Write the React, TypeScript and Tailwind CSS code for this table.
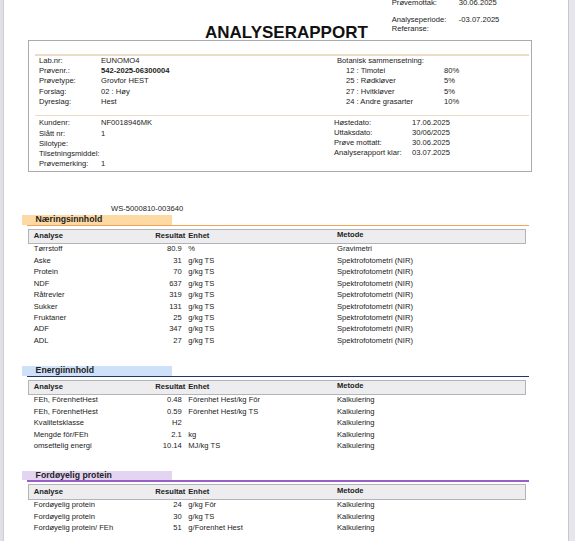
type Row = { analyse: string; resultat: string; enhet: string; metode: string };

const NAERING: Row[] = [
  { analyse: "Tørrstoff", resultat: "80.9", enhet: "%", metode: "Gravimetri" },
  { analyse: "Aske", resultat: "31", enhet: "g/kg TS", metode: "Spektrofotometri (NIR)" },
  { analyse: "Protein", resultat: "70", enhet: "g/kg TS", metode: "Spektrofotometri (NIR)" },
  { analyse: "NDF", resultat: "637", enhet: "g/kg TS", metode: "Spektrofotometri (NIR)" },
  { analyse: "Råtrevler", resultat: "319", enhet: "g/kg TS", metode: "Spektrofotometri (NIR)" },
  { analyse: "Sukker", resultat: "131", enhet: "g/kg TS", metode: "Spektrofotometri (NIR)" },
  { analyse: "Fruktaner", resultat: "25", enhet: "g/kg TS", metode: "Spektrofotometri (NIR)" },
  { analyse: "ADF", resultat: "347", enhet: "g/kg TS", metode: "Spektrofotometri (NIR)" },
  { analyse: "ADL", resultat: "27", enhet: "g/kg TS", metode: "Spektrofotometri (NIR)" },
];

const ENERGI: Row[] = [
  { analyse: "FEh, FôrenhetHest", resultat: "0.48", enhet: "Fôrenhet Hest/kg Fôr", metode: "Kalkulering" },
  { analyse: "FEh, FôrenhetHest", resultat: "0.59", enhet: "Fôrenhet Hest/kg TS", metode: "Kalkulering" },
  { analyse: "Kvalitetsklasse", resultat: "H2", enhet: "", metode: "Kalkulering" },
  { analyse: "Mengde fôr/FEh", resultat: "2.1", enhet: "kg", metode: "Kalkulering" },
  { analyse: "omsettelig energi", resultat: "10.14", enhet: "MJ/kg TS", metode: "Kalkulering" },
];

const PROTEIN: Row[] = [
  { analyse: "Fordøyelig protein", resultat: "24", enhet: "g/kg Fôr", metode: "Kalkulering" },
  { analyse: "Fordøyelig protein", resultat: "30", enhet: "g/kg TS", metode: "Kalkulering" },
  { analyse: "Fordøyelig protein/ FEh", resultat: "51", enhet: "g/Forenhet Hest", metode: "Kalkulering" },
];

const BOTANISK = [
  { navn: "12 : Timotei", pst: "80%" },
  { navn: "25 : Rødkløver", pst: "5%" },
  { navn: "27 : Hvitkløver", pst: "5%" },
  { navn: "24 : Andre grasarter", pst: "10%" },
];

function Section({
  title,
  rows,
  barClass,
  lineClass,
  className,
}: {
  title: string;
  rows: Row[];
  barClass: string;
  lineClass: string;
  className: string;
}) {
  return (
    <div className={className}>
      <div className={"ml-[18px] w-[150px] h-[9.7px] flex items-center pl-[13.6px] font-bold text-[8.7px] " + barClass}>
        {title}
      </div>
      <div className={"ml-[22.5px] w-[502.5px] h-[1.5px] " + lineClass} />
      <div className="ml-[24.3px] w-[498px] mt-[2.5px] h-[15.3px] border border-[#b3b3b8] bg-[#ededf0] flex items-center pb-[1px] font-bold">
        <div className="w-[110px] pl-[4.5px]">Analyse</div>
        <div className="w-[46px] text-right">Resultat</div>
        <div className="w-[151.7px] pl-[3px]">Enhet</div>
        <div className="pb-[2px]">Metode</div>
      </div>
      <div className="-mt-[0.5px]">
        {rows.map((r, i) => (
          <div key={i} className="ml-[25.3px] h-[11.45px] flex items-center">
            <div className="w-[110px] pl-[4.5px]">{r.analyse}</div>
            <div className="w-[46px] text-right pr-[3.5px]">{r.resultat}</div>
            <div className="w-[151.7px] pl-[3px]">{r.enhet}</div>
            <div>{r.metode}</div>
          </div>
        ))}
      </div>
    </div>
  );
}

export default function App() {
  return (
    <div className="w-[575px] h-[541px] overflow-hidden flex bg-white text-[#222] text-[7.6px] leading-none font-['Liberation_Sans',Arial,sans-serif]">
      <div className="w-[4px] bg-[#e0e0e6] border-r border-[#cdcdd4]" />
      <div className="w-[564px] bg-white">
        {/* header */}
        <div className="flex h-[40px]">
          <div className="ml-[201px] mt-[23.8px] text-[17px] leading-[17px] font-bold text-[#111]">ANALYSERAPPORT</div>
          <div className="ml-[24px] -mt-[1px] flex flex-col">
            <div className="h-[8.5px] flex items-center">
              <span className="w-[67px]">Prøvemottak:</span>
              <span>30.06.2025</span>
            </div>
            <div className="h-[8.5px] mt-[8.5px] flex items-center">
              <span className="w-[67px]">Analyseperiode:</span>
              <span>-03.07.2025</span>
            </div>
            <div className="h-[8.5px] flex items-center">
              <span className="w-[67px]">Referanse:</span>
            </div>
          </div>
        </div>

        {/* info box */}
        <div className="ml-[24px] w-[504px] h-[132px] border border-[#a9a9ae]">
          <div className="mt-[13px] ml-[6px] mr-[2px] h-[1.5px] bg-[#ecdcc7]" />
          <div className="flex">
            <div className="w-[308px] pl-[10px]">
              {[
                ["Lab.nr:", "EUNOMO4", false],
                ["Prøvenr.:", "542-2025-06300004", true],
                ["Prøvetype:", "Grovfor HEST", false],
                ["Forslag:", "02 : Høy", false],
                ["Dyreslag:", "Hest", false],
              ].map(([l, v, b], i) => (
                <div key={i} className="h-[10.3px] flex items-center">
                  <span className="w-[62px]">{l as string}</span>
                  <span className={b ? "font-bold" : ""}>{v as string}</span>
                </div>
              ))}
            </div>
            <div>
              <div className="h-[10.3px] flex items-center">Botanisk sammensetning:</div>
              {BOTANISK.map((b, i) => (
                <div key={i} className="h-[10.3px] flex items-center pl-[9px]">
                  <span className="w-[98px]">{b.navn}</span>
                  <span>{b.pst}</span>
                </div>
              ))}
            </div>
          </div>
          <div className="mt-[8px] ml-[6px] mr-[2px] h-[1.5px] bg-[#ecdcc7]" />
          <div className="flex mt-[1.7px]">
            <div className="w-[305px] pl-[10px]">
              {[
                ["Kundenr:", "NF0018946MK"],
                ["Slått nr:", "1"],
                ["Silotype:", ""],
                ["Tilsetningsmiddel:", ""],
                ["Prøvemerking:", "1"],
              ].map(([l, v], i) => (
                <div key={i} className="h-[10.1px] flex items-center">
                  <span className="w-[62px]">{l}</span>
                  <span>{v}</span>
                </div>
              ))}
            </div>
            <div>
              {[
                ["Høstedato:", "17.06.2025"],
                ["Uttaksdato:", "30/06/2025"],
                ["Prøve mottatt:", "30.06.2025"],
                ["Analyserapport klar:", "03.07.2025"],
              ].map(([l, v], i) => (
                <div key={i} className="h-[9.8px] flex items-center">
                  <span className="w-[78px]">{l}</span>
                  <span>{v}</span>
                </div>
              ))}
            </div>
          </div>
        </div>

        <div className="ml-[107px] mt-[32.5px] h-[9px] flex items-center">WS-5000810-003640</div>

        <Section
          className="mt-[1.5px]"
          title="Næringsinnhold"
          rows={NAERING}
          barClass="bg-[#fdd9a3]"
          lineClass="bg-[#f4a15a]"
        />
        <Section
          className="mt-[19.5px]"
          title="Energiinnhold"
          rows={ENERGI}
          barClass="bg-[#cfe1f8]"
          lineClass="bg-[#1d3a66]"
        />
        <Section
          className="mt-[19.2px]"
          title="Fordøyelig protein"
          rows={PROTEIN}
          barClass="bg-[#e3d4f1]"
          lineClass="bg-[#9a5fc7]"
        />
      </div>
      <div className="flex-1 bg-[#e6e6ec] border-l border-[#c8c8d0]" />
    </div>
  );
}
